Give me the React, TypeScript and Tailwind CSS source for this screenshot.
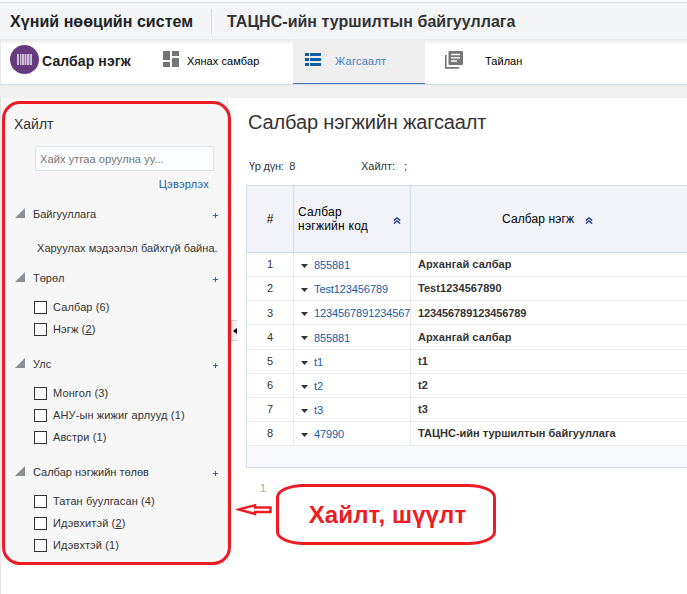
import React from 'react';

type Option = { label: string; count: number; underlined?: boolean; height: string };

function Plus() {
  return (
    <svg className="block h-[5px] w-[5px]" viewBox="0 0 5 5" shapeRendering="crispEdges">
      <path d="M2 0h1v2h2v1H3v2H2V3H0V2h2z" fill="#2b68a6" />
    </svg>
  );
}

function SectionHead({ title }: { title: string }) {
  return (
    <div className="flex h-[20px] items-center pl-[14px] pr-[9px]">
      <svg className="mb-[2px] h-[10px] w-[10px]" viewBox="0 0 10 10">
        <path d="M10 0v10H0z" fill="#8b8e92" />
      </svg>
      <span className="ml-[8px] flex-1 whitespace-nowrap">{title}</span>
      <div className="mt-[3px]">
        <Plus />
      </div>
    </div>
  );
}

function Options({ items }: { items: Option[] }) {
  return (
    <div className="flex flex-col pl-[33px]">
      {items.map((o) => (
        <div key={o.label} className={`flex items-center ${o.height}`}>
          <span className="h-[13px] w-[13px] border border-[#333] bg-white" />
          <span className="ml-[6px] whitespace-nowrap tracking-[0.12px]">
            {o.label} ({o.underlined ? <span className="underline underline-offset-1">{o.count}</span> : o.count})
          </span>
        </div>
      ))}
    </div>
  );
}

function SortIcon() {
  return (
    <svg className="h-[7px] w-[8px]" viewBox="0 0 8 7" fill="none" stroke="#2c4596" strokeWidth="1.4">
      <path d="M0.8 3.6 4 0.9l3.2 2.7M0.8 6.6 4 3.9l3.2 2.7" />
    </svg>
  );
}

const rows = [
  { code: '855881', name: 'Архангай салбар', height: 'h-[24px]', style: 'tracking-[0.05px]' },
  { code: 'Test123456789', name: 'Test1234567890', height: 'h-[24px]', style: 'tracking-[0.05px]' },
  { code: '1234567891234567', name: '123456789123456789', height: 'h-[24px]', style: 'pt-[2px] tracking-[-0.1px]' },
  { code: '855881', name: 'Архангай салбар', height: 'h-[25px]', style: 'tracking-[0.05px]' },
  { code: 't1', name: 't1', height: 'h-[24px]', style: '' },
  { code: 't2', name: 't2', height: 'h-[24px]', style: '' },
  { code: 't3', name: 't3', height: 'h-[24px]', style: '' },
  { code: '47990', name: 'ТАЦНС-ийн туршилтын байгууллага', height: 'h-[24px]', style: '' },
];

function Sidebar() {
  return (
    <aside className="h-[466px] w-[227px] shrink-0 border-r border-[#e9e9e9] bg-[#f7f7f7] pt-[16px] text-[11px] text-[#333]">
      <h2 className="pl-[13px] text-[14px] leading-[20px]">Хайлт</h2>
      <div className="ml-[34px] mt-[12px] flex h-[25px] w-[179px] items-center rounded-[1px] border border-[#dce3e6] bg-[#fcfdff] pl-[4px] pt-[1px] text-[#757575]">
        <span className="whitespace-nowrap tracking-[0.1px]">Хайх утгаа оруулна уу...</span>
      </div>
      <div className="mt-[3px] h-[20px] pr-[18px] text-right leading-[20px] tracking-[0.25px] text-[#1a5da0]">Цэвэрлэх</div>
      <div className="h-[10px]" />
      <SectionHead title="Байгууллага" />
      <div className="mt-[14px] h-[20px] whitespace-nowrap pl-[36px] leading-[20px] tracking-[0.05px]">
        Харуулах мэдээлэл байхгүй байна.
      </div>
      <div className="h-[10px]" />
      <SectionHead title="Төрөл" />
      <div className="h-[8px]" />
      <Options
        items={[
          { label: 'Салбар', count: 6, height: 'h-[22px]' },
          { label: 'Нэгж', count: 2, underlined: true, height: 'h-[22px]' },
        ]}
      />
      <div className="h-[14px]" />
      <SectionHead title="Улс" />
      <div className="h-[8px]" />
      <Options
        items={[
          { label: 'Монгол', count: 3, height: 'h-[22px]' },
          { label: 'АНУ-ын жижиг арлууд', count: 1, height: 'h-[22px]' },
          { label: 'Австри', count: 1, height: 'h-[22px]' },
        ]}
      />
      <div className="h-[14px]" />
      <SectionHead title="Салбар нэгжийн төлөв" />
      <div className="h-[8px]" />
      <Options
        items={[
          { label: 'Татан буулгасан', count: 4, height: 'h-[22px]' },
          { label: 'Идэвхитэй', count: 2, underlined: true, height: 'h-[22px]' },
          { label: 'Идэвхтэй', count: 1, height: 'h-[22px]' },
        ]}
      />
    </aside>
  );
}

function Table() {
  return (
    <div className="flex flex-col border-l border-t border-[#d3dde5]">
      <div className="flex h-[67px] border-b border-[#d3dde5] bg-[#f2f3f8] text-[12px] text-black">
        <div className="flex w-[47px] items-center justify-center border-r border-[#d3dde5]">#</div>
        <div className="flex w-[117px] items-center justify-between border-r border-[#d3dde5] pl-[4px] pr-[9px] leading-[14px]">
          <span className="tracking-[0.25px]">
            Салбар
            <br />
            нэгжийн код
          </span>
          <div className="mt-[3px]">
            <SortIcon />
          </div>
        </div>
        <div className="flex flex-1 items-center pl-[91px]">
          <span className="whitespace-nowrap tracking-[0.1px]">Салбар нэгж</span>
          <div className="ml-[11px] mt-[3px]">
            <SortIcon />
          </div>
        </div>
      </div>
      {rows.map((r, i) => (
        <div key={i} className={`flex border-b border-[#eaebec] text-[11px] text-[#333] ${r.height}`}>
          <div className={`flex w-[47px] items-center justify-center border-r border-[#e6e8ea] ${r.style}`}>{i + 1}</div>
          <div className="flex w-[117px] items-center overflow-hidden border-r border-[#e6e8ea] pl-[7px] pt-[2px]">
            <svg className="h-[4px] w-[7px] shrink-0" viewBox="0 0 7 4">
              <path d="M0 0h7L3.5 4z" fill="#333" />
            </svg>
            <span className="ml-[6px] whitespace-nowrap tracking-[-0.1px] text-[#1a5da0]">{r.code}</span>
          </div>
          <div className={`flex flex-1 items-center whitespace-nowrap pl-[7px] font-bold ${r.style}`}>{r.name}</div>
        </div>
      ))}
      <div className="h-[22px] border-b border-[#d3dde5] bg-[#f8f9fd]" />
    </div>
  );
}

export default function App() {
  return (
    <div className="relative h-[594px] w-[687px] overflow-hidden bg-white font-['Liberation_Sans',Arial,sans-serif] text-[#333]">
      <div className="h-[3px] border-b border-[#dcdfe2] bg-[#f8f9fa]" />
      <header className="flex h-[36px] items-center bg-[#f2f4f5] text-[16px] font-bold">
        <div className="w-[211px] whitespace-nowrap pl-[10px] pt-[2px] tracking-[0.05px] text-[#222]">Хүний нөөцийн систем</div>
        <div className="h-[25px] w-px bg-[#d6d9dc]" />
        <div className="whitespace-nowrap pl-[15px] pt-[2px] tracking-[0.03px]">ТАЦНС-ийн туршилтын байгууллага</div>
      </header>

      <nav className="flex h-[46px] border-b border-l border-b-[#d3dbe5] border-l-[#e9e9e9] bg-gradient-to-b from-[#e8e8e8] via-white via-[12%] to-white text-[11px] text-black">
        <div className="flex w-[160px] items-center pb-[4px] pl-[9px]">
          <svg className="h-[29px] w-[29px]" viewBox="0 0 29 29">
            <circle cx="14.5" cy="14.5" r="14.5" fill="#683b80" />
            <g fill="#cdbcd7" shapeRendering="crispEdges">
              <path d="M7 9h2v11H7zM10 9h1v11h-1zM12 9h2v11h-2zM15 9h1v11h-1zM17 9h2v11h-2zM20 9h2v11h-2z" />
              <path d="M11 9h1v11h-1zM14 9h1v11h-1zM16 9h1v11h-1zM19 9h1v11h-1z" opacity=".5" />
            </g>
          </svg>
          <span className="ml-[3px] mt-[3px] whitespace-nowrap text-[14px] font-bold tracking-[0.1px] text-[#222]">
            Салбар нэгж
          </span>
        </div>
        <div className="flex w-[132px] items-center pl-[2px]">
          <svg className="mb-[4px] h-[17px] w-[16px]" viewBox="0 0 16 17" shapeRendering="crispEdges">
            <path d="M0 0h7v9H0zM9 0h7v5H9zM0 11h7v5H0zM9 7h7v9H9z" fill="#757575" />
          </svg>
          <span className="mb-[1px] ml-[8px] whitespace-nowrap tracking-[0.08px]">Хянах самбар</span>
        </div>
        <div className="flex w-[132px] items-center border-b border-[#4478b0] bg-[#eee] pl-[12px]">
          <svg className="mb-[4px] h-[13px] w-[16px]" viewBox="0 0 16 13" shapeRendering="crispEdges">
            <path d="M0 0h4v3H0zM5 0h11v3H5zM0 5h4v3H0zM5 5h11v3H5zM0 10h4v3H0zM5 10h11v3H5z" fill="#145ea8" />
          </svg>
          <span className="ml-[14px] tracking-[0.25px] text-[#4a7fc4]">Жагсаалт</span>
        </div>
        <div className="flex items-center pl-[20px]">
          <svg className="mb-[4px] h-[18px] w-[18px]" viewBox="0 0 18 18">
            <path d="M.8 4v12.9H14" fill="none" stroke="#757575" strokeWidth="1.6" />
            <rect x="3.5" width="14.5" height="14" rx="1" fill="#757575" />
            <path d="M6 3.5h9M6 6.8h9M6 10h6" stroke="#fff" strokeWidth="1.4" />
          </svg>
          <span className="mb-[1px] ml-[22px] tracking-[0.05px]">Тайлан</span>
        </div>
      </nav>

      <div className="h-[13px] bg-[#efefef]" />

      <div className="flex h-[496px] border-l border-[#e3e3e3]">
        <Sidebar />
        <div className="flex w-[9px] shrink-0 flex-col pt-[222px]">
          <div className="ml-[3px] flex h-[21px] w-[6px] items-center justify-end border border-r-0 border-[#cbd6dc] bg-[#eef1f3]">
            <svg className="h-[6px] w-[4px]" viewBox="0 0 4 6">
              <path d="M4 0v6L0 3z" fill="#000" />
            </svg>
          </div>
        </div>
        <main className="flex min-w-0 flex-1 flex-col pl-[9px]">
          <h1 className="mt-[10px] h-[28px] whitespace-nowrap pl-[2px] text-[20px] leading-[28px] tracking-[-0.14px]">
            Салбар нэгжийн жагсаалт
          </h1>
          <div className="mt-[20px] flex h-[20px] items-center pl-[3px] text-[11px]">
            <span className="w-[112px] tracking-[-0.25px]">Үр дүн:&nbsp; 8</span>
            <span className="w-[43px]">Хайлт:</span>
            <span>;</span>
          </div>
          <div className="mt-[9px]">
            <Table />
          </div>
          <div className="mt-[12px] pl-[14px] text-[11px] leading-[16px] text-[#a6abb0]">1</div>
        </main>
      </div>

      {/* Red annotation marks laid over the page */}
      <div className="absolute left-[2px] top-[101px] h-[464px] w-[229px] rounded-[18px] border-[3px] border-[#ed1c24]" />
      <svg className="absolute left-[236px] top-[503px] h-[13px] w-[36px]" viewBox="0 0 36 13" fill="none" stroke="#ed1c24" strokeWidth="2.4">
        <path d="M3 6.500 19 2.200v2.300h15.500v4.500H19v2z" />
      </svg>
      <div className="absolute left-[276px] top-[484px] flex h-[61px] w-[220px] items-center justify-center rounded-[28px/13px] border-[3px] border-[#ed1c24] pl-[3px] text-[24px] font-bold tracking-[0.1px] text-[#ed1c24]">
        <span className="whitespace-nowrap">Хайлт, шүүлт</span>
      </div>
    </div>
  );
}
